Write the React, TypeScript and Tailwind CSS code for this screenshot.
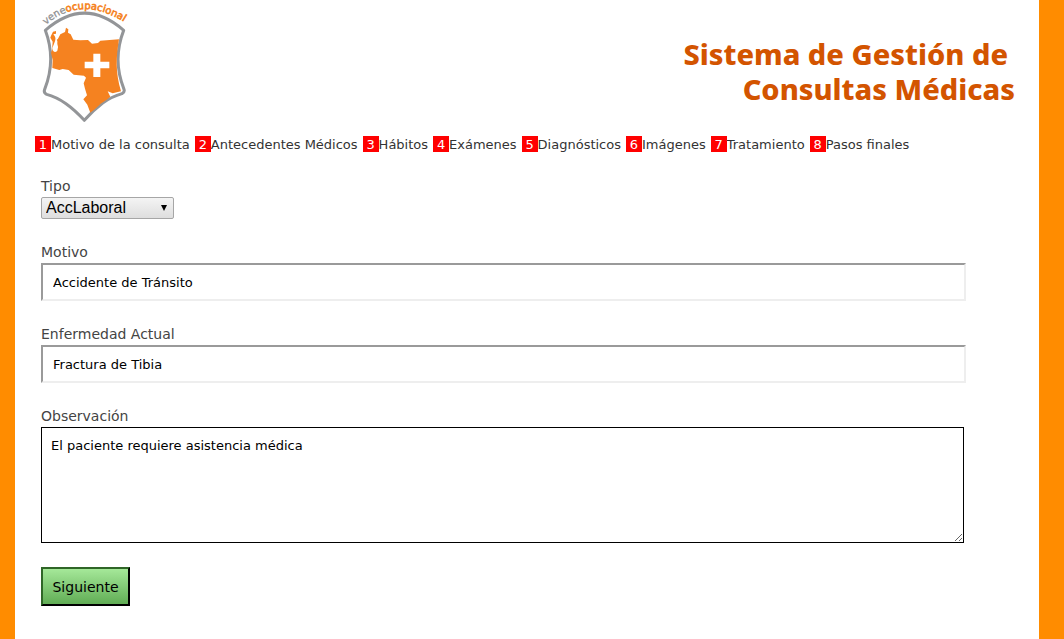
import type { ReactNode } from "react";

const steps = [
  "Motivo de la consulta",
  "Antecedentes Médicos",
  "Hábitos",
  "Exámenes",
  "Diagnósticos",
  "Imágenes",
  "Tratamiento",
  "Pasos finales",
];

function Logo() {
  return (
    <svg
      viewBox="0 0 330 390"
      className="h-[130px] w-[110px] shrink-0"
      role="img"
      aria-label="veneocupacional"
    >
      <defs>
        <path id="arc" d="M47 75 Q160 -22 300 78" />
      </defs>
      <text
        fontFamily="'DejaVu Sans', sans-serif"
        fontSize="30"
        fill="#8f9092"
        stroke="#8f9092"
        strokeWidth="0.8"
      >
        <textPath href="#arc">
          vene
          <tspan fill="#f58220" stroke="#f58220" strokeWidth="1.8">
            ocupacional
          </tspan>
        </textPath>
      </text>
      <path
        d="M46 91 Q163 -12 281 91 C258 150 259 210 282 268 Q285 276 276 281 Q245 290 218 309 Q190 330 163 361 Q135 330 108 311 Q78 290 50 283 Q40 278 44 268 C67 210 68 150 46 91 Z"
        fill="#fff"
        stroke="#939598"
        strokeWidth="9"
        strokeLinejoin="round"
      />
      <path
        d="M78 93 L69 95 L63 107 L61 113 L68 125 L66 150 L63 158 L68 180 L67 204 L88 210 L98 207 L116 210 L131 224 L162 227 L168 233 L161 250 L165 266 L171 286 L160 298 L172 314 L181 338 L196 326 L212 311 L230 299 L241 290 L233 274 L248 280 L273 274 C256 215 258 175 267 118 L211 122 L204 129 L186 131 L174 120 L151 121 L130 119 L122 103 L114 98 L115 88 L108 83 L105 96 L91 103 L84 116 L79 121 L74 108 L70 103 L78 101 Z"
        fill="#f58220"
      />
      <path
        d="M77 114 Q83 120 82 132 Q87 143 82 152 Q74 160 68 151 Q65 143 71 134 Q76 124 77 114 Z"
        fill="#fff"
      />
      <path
        d="M190 161 H211 V185 H238 V205 H211 V231 H190 V205 H164 V185 H190 Z"
        fill="#fff"
      />
    </svg>
  );
}

function Field({ id, label, children }: { id: string; label: string; children: ReactNode }) {
  return (
    <div className="flex flex-col items-start">
      <label htmlFor={id} className="text-sm leading-[21px] text-[#444]">
        {label}
      </label>
      {children}
    </div>
  );
}

const inputClass =
  "h-[38px] w-full border-2 border-t-[#9a9a9a] border-l-[#9a9a9a] border-r-[#eee] border-b-[#eee] bg-white px-2.5 text-[13px] text-black outline-none";

export default function App() {
  return (
    <div className="min-h-screen bg-[#ff8c00] pr-[25px] pl-[15px] font-['DejaVu_Sans',sans-serif]">
      <div className="min-h-screen bg-white pb-8">
        <header className="flex items-start justify-between pr-6 pl-[15px]">
          <Logo />
          <h1 className="pt-9 text-right font-['Noto_Sans',sans-serif] text-[29px] leading-[35px] font-extrabold text-[#d35400]">
            <span className="pr-[7px]">Sistema de Gestión de</span>
            <br />
            Consultas Médicas
          </h1>
        </header>

        <ol className="flex flex-wrap gap-x-[5px] pt-1.5 pl-5 text-[13px] leading-[18px] text-[#333]">
          {steps.map((step, i) => (
            <li key={step} className="flex">
              <span className="h-4 w-4 bg-[#f00] text-center text-white">{i + 1}</span>
              <a href="#">{step}</a>
            </li>
          ))}
        </ol>

        <form
          className="flex flex-col gap-[23px] pt-[22px] pr-[73px] pl-[26px]"
          onSubmit={(e) => e.preventDefault()}
        >
          <Field id="tipo" label="Tipo">
            <div className="relative">
              <select
                id="tipo"
                className="block h-[22px] w-[133px] appearance-none rounded-xs border border-[#a6a6a6] bg-linear-to-b from-[#f4f4f4] to-[#dedede] pl-1 font-['Liberation_Sans',sans-serif] text-base leading-5 text-black"
              >
                <option>AccLaboral</option>
              </select>
              <svg
                viewBox="0 0 6 6"
                className="pointer-events-none absolute top-2 right-[7px] h-1.5 w-1.5"
                aria-hidden="true"
              >
                <path d="M0 0H6L3 6Z" fill="#000" />
              </svg>
            </div>
          </Field>
          <Field id="motivo" label="Motivo">
            <input id="motivo" className={inputClass} defaultValue="Accidente de Tránsito" />
          </Field>
          <Field id="enfermedad" label="Enfermedad Actual">
            <input id="enfermedad" className={inputClass} defaultValue="Fractura de Tibia" />
          </Field>
          <Field id="observacion" label="Observación">
            <div className="flex w-full pr-0.5">
              <textarea
                id="observacion"
                className="h-[116px] w-full resize border border-black bg-white px-[9px] py-2.5 text-[13px] leading-4 text-black outline-none"
                defaultValue="El paciente requiere asistencia médica"
              />
            </div>
          </Field>
          <button
            type="submit"
            className="mt-px h-[39px] min-w-[89px] self-start border-2 border-t-[#2f6627] border-r-black border-b-black border-l-[#2f6627] bg-linear-to-b from-[#a5e899] to-[#61ad55] px-[9px] text-sm text-black"
          >
            Siguiente
          </button>
        </form>
      </div>
    </div>
  );
}
